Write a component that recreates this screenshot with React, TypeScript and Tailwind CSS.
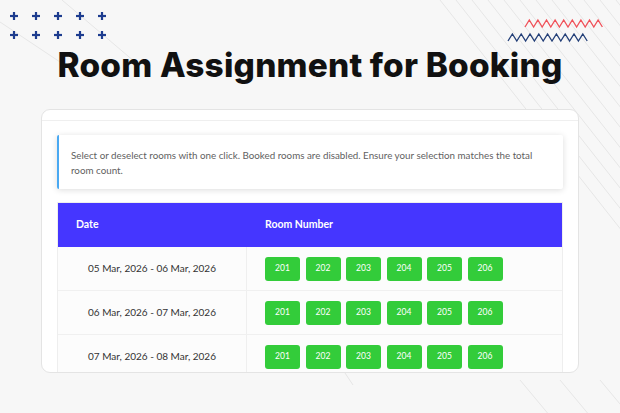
import React from "react";

const dates = [
  "05 Mar, 2026 - 06 Mar, 2026",
  "06 Mar, 2026 - 07 Mar, 2026",
  "07 Mar, 2026 - 08 Mar, 2026",
];
const rooms = ["201", "202", "203", "204", "205", "206"];

const zigzag = (x0: number, y0: number, n: number, w: number, h: number) => {
  let d = `M${x0} ${y0 + h}`;
  for (let i = 0; i < n; i++) {
    d += ` L${x0 + i * w + w / 2} ${y0} L${x0 + (i + 1) * w} ${y0 + h}`;
  }
  return d;
};

const Backdrop = () => (
  <svg className="pointer-events-none absolute inset-0" width="620" height="413" viewBox="0 0 620 413">
    <g stroke="#e6e6e6" strokeWidth="1" fill="none">
      <line x1="0" y1="22" x2="60" y2="62" />
      <line x1="62" y1="0" x2="135" y2="62" />
      {Array.from({ length: 14 }).map((_, i) => (
        <line key={i} x1={440 + i * 16} y1="0" x2={700 + i * 16} y2="330" />
      ))}
      {Array.from({ length: 5 }).map((_, i) => (
        <line key={"b" + i} x1={520 + i * 40} y1="380" x2={570 + i * 40} y2="440" />
      ))}
      <line x1="345" y1="373" x2="353" y2="385" />
    </g>
    <g stroke="#1d3c8f" strokeWidth="2.2" strokeLinecap="butt">
      {[0, 1, 2, 3, 4].map((c) =>
        [0, 1].map((r) => {
          const cx = 14 + c * 22;
          const cy = 16 + r * 19;
          return (
            <g key={`${c}-${r}`}>
              <line x1={cx - 4} y1={cy} x2={cx + 4} y2={cy} />
              <line x1={cx} y1={cy - 4} x2={cx} y2={cy + 4} />
            </g>
          );
        })
      )}
    </g>
    <path d={zigzag(525, 20, 9, 8.6, 7)} stroke="#f0525a" strokeWidth="1.3" fill="none" />
    <path d={zigzag(508, 34, 9, 8.8, 7)} stroke="#233f78" strokeWidth="1.3" fill="none" />
  </svg>
);

export default function App() {
  return (
    <div className="relative h-[413px] w-[620px] overflow-hidden bg-[#f7f7f7]">
      <Backdrop />
      <div className="relative flex flex-col items-center">
        <h1 className="mt-[45px] text-[33.4px] font-extrabold leading-[40px] tracking-[0.2px] text-[#111] [font-family:Inter,sans-serif]">
          Room Assignment for Booking
        </h1>

        <div className="mt-[24px] h-[264px] w-[538px] overflow-hidden rounded-[9px] border border-[#e4e4e4] bg-white [font-family:Lato,sans-serif]">
          <div className="h-[11px] border-b border-[#efefef]" />
          <div className="px-[15px] pt-[14px]">
            <div className="rounded-[2px] border-l-2 border-[#4aa9f2] bg-white pb-[11px] pl-[12px] pr-[10px] pt-[13px] text-[9.8px] leading-[15px] text-[#5f5f5f] shadow-[0_1px_6px_rgba(0,0,0,0.14)]">
              Select or deselect rooms with one click. Booked rooms are disabled. Ensure your selection matches the total room count.
            </div>

            <div className="mt-[13px] border border-[#eeeeee]">
              <div className="flex h-[44px] items-center bg-[#4536ff] text-[10.5px] font-bold text-white">
                <div className="w-[189px] pl-[18px]">Date</div>
                <div className="pl-[18px]">Room Number</div>
              </div>
              {dates.map((d) => (
                <div key={d} className="flex h-[44px] border-b border-[#f0f0f0] bg-[#fcfcfc]">
                  <div className="flex w-[189px] items-center justify-center border-r border-[#efefef] text-[10px] text-[#333]">
                    {d}
                  </div>
                  <div className="flex items-center gap-[5.5px] pl-[18px]">
                    {rooms.map((r) => (
                      <button
                        key={r}
                        className="flex h-[24px] w-[35px] items-center justify-center rounded-[3px] bg-[#33cc3a] text-[8.5px] text-white"
                      >
                        {r}
                      </button>
                    ))}
                  </div>
                </div>
              ))}
            </div>
          </div>
        </div>
      </div>
    </div>
  );
}
